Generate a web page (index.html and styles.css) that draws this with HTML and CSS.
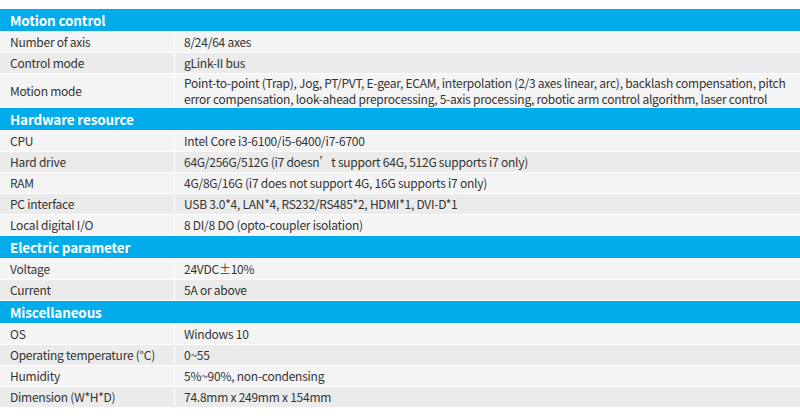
FILE: index.html
```html
<!DOCTYPE html>
<html lang="en">
<head>
<meta charset="utf-8">
<title>Specifications</title>
<link rel="stylesheet" href="styles.css">
</head>
<body>
<div class="spec">
  <section class="group">
    <h2 class="sec">Motion control</h2>
    <div class="row"><div class="k">Number of axis</div><div class="v">8/24/64 axes</div></div>
    <div class="row"><div class="k">Control mode</div><div class="v">gLink-II bus</div></div>
    <div class="row tall"><div class="k">Motion mode</div><div class="v">Point-to-point (Trap), Jog, PT/PVT, E-gear, ECAM, interpolation (2/3 axes linear, arc), backlash compensation, pitch error compensation, look-ahead preprocessing, 5-axis processing, robotic arm control algorithm, laser control</div></div>
  </section>
  <section class="group">
    <h2 class="sec">Hardware resource</h2>
    <div class="row"><div class="k">CPU</div><div class="v">Intel Core i3-6100/i5-6400/i7-6700</div></div>
    <div class="row"><div class="k">Hard drive</div><div class="v">64G/256G/512G (i7 doesn’t support 64G, 512G supports i7 only)</div></div>
    <div class="row"><div class="k">RAM</div><div class="v">4G/8G/16G (i7 does not support 4G, 16G supports i7 only)</div></div>
    <div class="row"><div class="k">PC interface</div><div class="v">USB 3.0*4, LAN*4, RS232/RS485*2, HDMI*1, DVI-D*1</div></div>
    <div class="row"><div class="k">Local digital I/O</div><div class="v">8 DI/8 DO (opto-coupler isolation)</div></div>
  </section>
  <section class="group">
    <h2 class="sec">Electric parameter</h2>
    <div class="row"><div class="k">Voltage</div><div class="v">24VDC±10%</div></div>
    <div class="row"><div class="k">Current</div><div class="v">5A or above</div></div>
  </section>
  <section class="group">
    <h2 class="sec">Miscellaneous</h2>
    <div class="row"><div class="k">OS</div><div class="v">Windows 10</div></div>
    <div class="row"><div class="k">Operating temperature (°C)</div><div class="v">0~55</div></div>
    <div class="row"><div class="k">Humidity</div><div class="v">5%~90%, non-condensing</div></div>
    <div class="row"><div class="k">Dimension (W*H*D)</div><div class="v">74.8mm x 249mm x 154mm</div></div>
  </section>
</div>
</body>
</html>
```
FILE: styles.css
```css
html, body {
  margin: 0;
  padding: 0;
  background: #ffffff;
}
body {
  padding-top: 9px;
  font-family: "Noto Sans CJK SC", "Source Sans Pro", "Noto Sans", sans-serif;
  color: #333333;
}
.spec {
  width: 800px;
  display: flex;
  flex-direction: column;
}
.sec {
  margin: 0;
  background: #00adea;
  color: #ffffff;
  font-weight: 700;
  font-size: 13.5px;
  letter-spacing: -0.15px;
  height: 22px;
  line-height: 22px;
  padding-left: 10px;
  border-bottom: 1px solid #ffffff;
}
.row {
  display: grid;
  grid-template-columns: 174px 1fr;
  column-gap: 1px;
  border-bottom: 1px solid #ffffff;
  font-size: 12px;
  letter-spacing: -0.25px;
  line-height: 20px;
}
.group .row:nth-of-type(odd) .k,
.group .row:nth-of-type(odd) .v { background: #f4f4f4; }
.group .row:nth-of-type(even) .k,
.group .row:nth-of-type(even) .v { background: #ebebeb; }
.k {
  padding-left: 10px;
  display: flex;
  align-items: center;
  min-height: 20px;
}
.v {
  padding-left: 9px;
  padding-right: 8px;
  display: flex;
  align-items: center;
  min-height: 20px;
}
.tall .k,
.tall .v {
  min-height: 33px;
  line-height: 16px;
}
```
